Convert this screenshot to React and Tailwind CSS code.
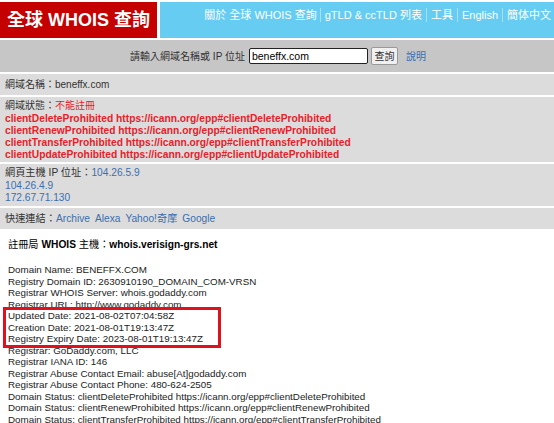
export default function App() {
  const whois = [
    "Domain Name: BENEFFX.COM",
    "Registry Domain ID: 2630910190_DOMAIN_COM-VRSN",
    "Registrar WHOIS Server: whois.godaddy.com",
    "Registrar URL: http://www.godaddy.com",
  ];
  const boxed = [
    "Updated Date: 2021-08-02T07:04:58Z",
    "Creation Date: 2021-08-01T19:13:47Z",
    "Registry Expiry Date: 2023-08-01T19:13:47Z",
  ];
  const rest = [
    "Registrar: GoDaddy.com, LLC",
    "Registrar IANA ID: 146",
    "Registrar Abuse Contact Email: abuse[At]godaddy.com",
    "Registrar Abuse Contact Phone: 480-624-2505",
    "Domain Status: clientDeleteProhibited https://icann.org/epp#clientDeleteProhibited",
    "Domain Status: clientRenewProhibited https://icann.org/epp#clientRenewProhibited",
    "Domain Status: clientTransferProhibited https://icann.org/epp#clientTransferProhibited",
    "Domain Status: clientUpdateProhibited https://icann.org/epp#clientUpdateProhibited",
  ];
  const statuses = ["Delete", "Renew", "Transfer", "Update"];
  return (
    <div className="w-[554px] h-[423px] overflow-hidden bg-white text-[#333] whitespace-nowrap font-['Liberation_Sans','Noto_Sans_CJK_TC',sans-serif]">
      <div className="flex pt-[2px] h-[38px]">
        <div className="w-[157px] bg-[#c40000] text-white font-bold text-[18px] flex items-center justify-center">
          全球 WHOIS 查詢
        </div>
        <div className="ml-[3px] flex-1 bg-[#66ccf2] flex justify-end items-start pt-[6px] text-white text-[11px] leading-[14px]">
          <span className="pr-[3px]">關於 全球 WHOIS 查詢</span>
          <span className="px-[4px] border-l border-[#a5e0f7]">gTLD &amp; ccTLD 列表</span>
          <span className="px-[4px] border-l border-[#a5e0f7]">工具</span>
          <span className="px-[4px] border-l border-[#a5e0f7]">English</span>
          <span className="pl-[4px] pr-[3px] border-l border-[#a5e0f7]">簡体中文</span>
        </div>
      </div>
      <div className="mt-[2px] h-[32px] bg-[#c6c6c6] flex items-center justify-center text-[10px] pl-[2px]">
        <span>請輸入網域名稱或 IP 位址</span>
        <div className="ml-[4px] w-[119px] h-[16px] border border-[#222] rounded-[2px] bg-white text-[10.5px] leading-[14px] pl-[2px] text-black">beneffx.com</div>
        <div className="ml-[3px] w-[27px] h-[18px] border border-[#999] bg-[#f0f0f0] rounded-[2px] flex items-center justify-center text-[10px]">查詢</div>
        <span className="ml-[8px] text-[#3a6fb0]">說明</span>
      </div>
      <div className="mt-[2px] flex flex-col gap-[2px] text-[10px]">
        <div className="bg-[#dcdcdc] h-[21px] px-[5px] flex items-center">
          網域名稱：beneffx.com
        </div>
        <div className="bg-[#dcdcdc] px-[5px] pt-[3px] pb-[4px] leading-[12px] h-[65px]">
          <div className="mb-[1px]">網域狀態：<span className="text-[#e8202a]">不能註冊</span></div>
          {statuses.map((s) => (
            <div key={s} className="text-[#e8202a] font-bold text-[10.25px]">
              client{s}Prohibited https://icann.org/epp#client{s}Prohibited
            </div>
          ))}
        </div>
        <div className="bg-[#dcdcdc] px-[5px] pt-[3px] leading-[12.5px] h-[42px] text-[10.2px]">
          <div>網頁主機 IP 位址：<span className="text-[#3a6fb0]">104.26.5.9</span></div>
          <div className="text-[#3a6fb0]">104.26.4.9</div>
          <div className="text-[#3a6fb0]">172.67.71.130</div>
        </div>
        <div className="bg-[#dcdcdc] h-[21px] px-[5px] flex items-center text-[10.2px]">
          快速連結：
          <span className="text-[#3a6fb0] flex gap-[5px]">
            <span>Archive</span><span>Alexa</span><span>Yahoo!奇摩</span><span>Google</span>
          </span>
        </div>
      </div>
      <div className="pl-[8px] pt-[9px] text-[10.2px] text-black">
        <div className="leading-[14px]">
          註冊局 <b>WHOIS</b> 主機：<b>whois.verisign-grs.net</b>
        </div>
        <div className="mt-[12px] text-[9.8px] leading-[11.5px] text-[#222]">
          {whois.map((l) => (<div key={l}>{l}</div>))}
          <div className="-ml-[5px] w-[218px] border-[3px] border-[#e0101c] pl-[2px] -my-[3px] relative">
            {boxed.map((l) => (<div key={l}>{l}</div>))}
          </div>
          {rest.map((l) => (<div key={l}>{l}</div>))}
        </div>
      </div>
    </div>
  );
}
